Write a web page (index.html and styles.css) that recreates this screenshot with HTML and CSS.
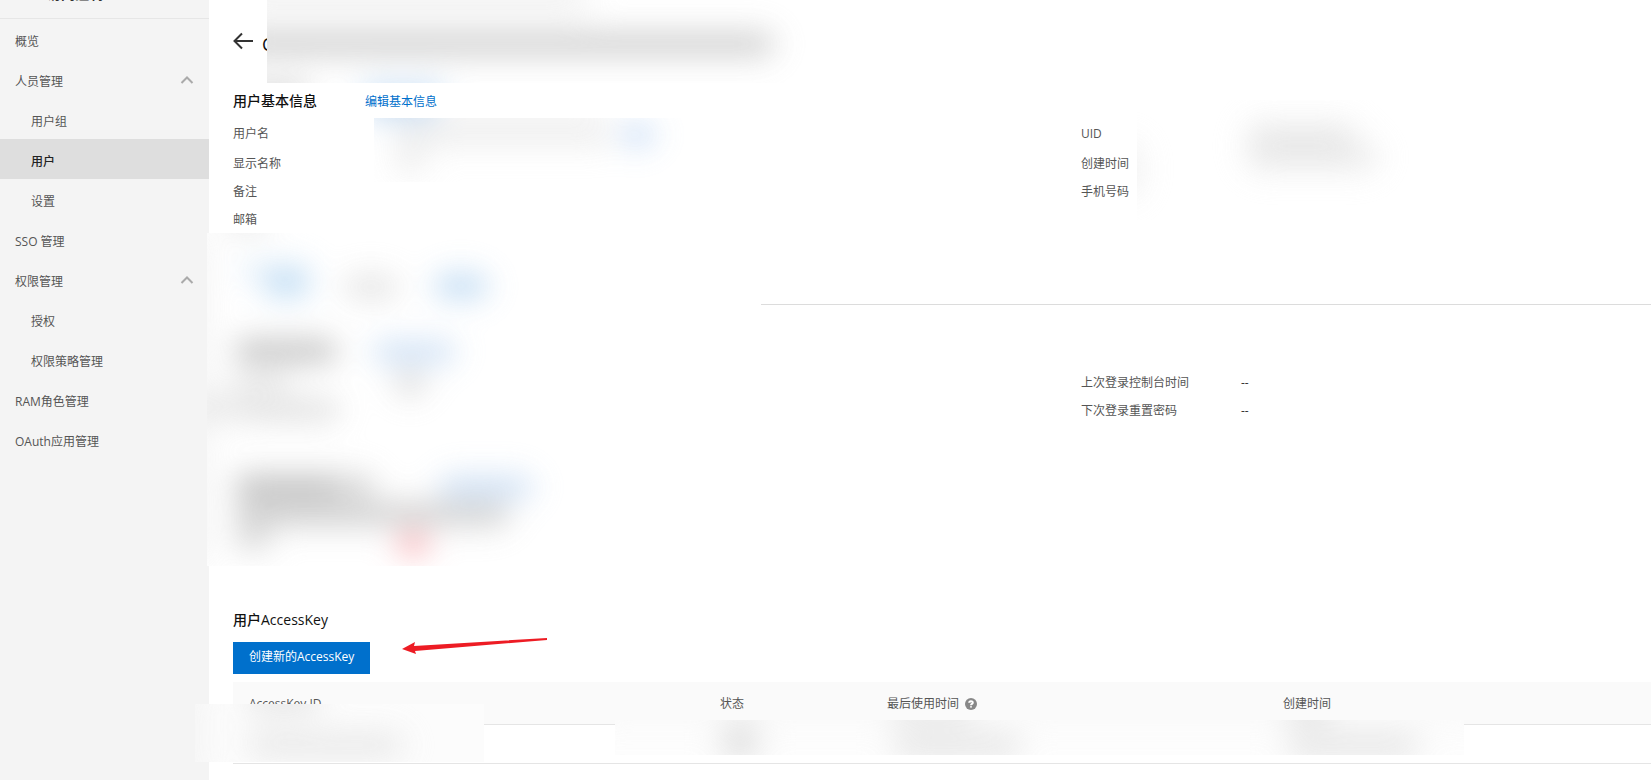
FILE: index.html
```html
<!DOCTYPE html>
<html lang="zh-CN">
<head>
    <meta charset="UTF-8">
    <meta name="viewport" content="width=device-width, initial-scale=1.0">
    <title>RAM访问控制</title>
    <link rel="stylesheet" href="styles.css">
</head>
<body>
    <!-- Sidebar -->
    <aside class="sidebar">
        <div class="sidebar-title">RAM访问控制</div>
        <nav class="menu">
            <a href="#" class="menu-item">概览</a>
            <button type="button" class="menu-item menu-group">人员管理
                <svg class="chevron" viewBox="0 0 14 8"><path d="M1.5 7L7 1.5L12.5 7"/></svg>
            </button>
            <a href="#" class="menu-item sub">用户组</a>
            <a href="#" class="menu-item sub active">用户</a>
            <a href="#" class="menu-item sub">设置</a>
            <a href="#" class="menu-item">SSO 管理</a>
            <button type="button" class="menu-item menu-group">权限管理
                <svg class="chevron" viewBox="0 0 14 8"><path d="M1.5 7L7 1.5L12.5 7"/></svg>
            </button>
            <a href="#" class="menu-item sub">授权</a>
            <a href="#" class="menu-item sub">权限策略管理</a>
            <a href="#" class="menu-item">RAM角色管理</a>
            <a href="#" class="menu-item">OAuth应用管理</a>
        </nav>
    </aside>

    <!-- Main content -->
    <main class="content">
        <div class="breadcrumb">RAM访问控制</div>
        <div class="page-head">
            <a href="#" class="back">
                <svg viewBox="0 0 20 18"><path d="M20 9H2M9 1.5L1.5 9L9 16.5"/></svg>
            </a>
            <h1>C</h1>
        </div>

        <section class="basic">
            <div class="section-head">
                <h2>用户基本信息</h2>
                <a href="#" class="edit-link">编辑基本信息</a>
            </div>
            <div class="info">
                <dl>
                    <div class="row first"><dt>用户名</dt><dd></dd></div>
                    <div class="row"><dt>显示名称</dt><dd></dd></div>
                    <div class="row"><dt>备注</dt><dd></dd></div>
                    <div class="row"><dt>邮箱</dt><dd></dd></div>
                </dl>
                <dl>
                    <div class="row first"><dt>UID</dt><dd></dd></div>
                    <div class="row"><dt>创建时间</dt><dd></dd></div>
                    <div class="row"><dt>手机号码</dt><dd></dd></div>
                </dl>
            </div>
        </section>

        <div class="tabs"></div>

        <section class="login">
            <div class="info">
                <dl></dl>
                <dl>
                    <div class="row"><dt>上次登录控制台时间</dt><dd>--</dd></div>
                    <div class="row"><dt>下次登录重置密码</dt><dd>--</dd></div>
                </dl>
            </div>
        </section>

        <section class="keys">
            <h2>用户AccessKey</h2>
            <button type="button" class="primary">创建新的AccessKey</button>
            <table>
                <colgroup>
                    <col class="col-id">
                    <col class="col-status">
                    <col class="col-used">
                    <col>
                </colgroup>
                <thead>
                    <tr>
                        <th>AccessKey ID</th>
                        <th>状态</th>
                        <th>最后使用时间
                            <svg class="help" viewBox="0 0 12 12"><circle cx="6" cy="6" r="6"/><path d="M4.2 4.8C4.2 2.6 7.8 2.6 7.8 4.7C7.8 5.8 6 5.9 6 7.2M6 8.3V9.6"/></svg>
                        </th>
                        <th>创建时间</th>
                    </tr>
                </thead>
                <tbody>
                    <tr><td></td><td></td><td></td><td></td></tr>
                </tbody>
            </table>
        </section>

        <!-- Red pointer next to the create button -->
        <svg class="pointer" viewBox="0 0 146 18"><path d="M0 11L13 4L12 8L145 0V2L13 13L14 16Z"/></svg>

        <!-- Blurred private data -->
        <svg class="mask mask-title" viewBox="0 0 540 83">
            <rect width="540" height="83" fill="#fff"/>
            <g class="smudge">
                <rect x="-30" y="-20" width="350" height="34" fill="#f1f1f1"/>
                <rect x="-30" y="34" width="535" height="20" fill="#bdbdbd"/>
                <rect x="-30" y="84" width="70" height="20" fill="#c8c8c8"/>
                <rect x="96" y="88" width="80" height="20" fill="#a8cdf1"/>
            </g>
        </svg>
        <svg class="mask mask-name" viewBox="0 0 310 64">
            <rect width="310" height="64" fill="#fff"/>
            <g class="smudge">
                <rect x="-8" y="-24" width="70" height="22" fill="#a8c8ea"/>
                <rect x="62" y="-20" width="170" height="15" fill="#eee"/>
                <rect x="24" y="10" width="212" height="14" fill="#dedede"/>
                <rect x="22" y="28" width="28" height="26" fill="#eaeaea"/>
                <rect x="250" y="9" width="28" height="16" fill="#a3c5f0"/>
            </g>
        </svg>
        <svg class="mask mask-uid" viewBox="0 0 280 120">
            <g class="smudge">
                <rect x="-20" y="44" width="20" height="50" fill="#e6e6e6"/>
                <rect x="112" y="24" width="104" height="22" fill="#e4e4e4"/>
                <rect x="112" y="46" width="126" height="22" fill="#e4e4e4"/>
            </g>
        </svg>
        <svg class="mask mask-login" viewBox="0 0 554 333">
            <rect width="554" height="333" fill="#fff"/>
            <g class="smudge">
                <rect x="-20" y="0" width="22" height="333" fill="#f1f1f1"/>
                <rect x="20" y="-22" width="40" height="20" fill="#ddd"/>
                <rect x="36" y="32" width="66" height="12" fill="#cce2f5"/>
                <rect x="60" y="42" width="40" height="20" fill="#a8d0f0"/>
                <rect x="140" y="45" width="48" height="18" fill="#d4d4d4"/>
                <rect x="230" y="43" width="48" height="20" fill="#a6ccee"/>
                <rect x="30" y="108" width="98" height="20" fill="#adadad"/>
                <rect x="168" y="110" width="78" height="18" fill="#b9d3f1"/>
                <rect x="190" y="140" width="26" height="20" fill="#cbcbcb"/>
                <rect x="28" y="140" width="54" height="18" fill="#dedede"/>
                <rect x="-20" y="162" width="64" height="26" fill="#e4e4e4"/>
                <rect x="42" y="168" width="88" height="18" fill="#d2d2d2"/>
                <rect x="30" y="242" width="98" height="24" fill="#b4b4b4"/>
                <rect x="128" y="242" width="38" height="24" fill="#cfcfcf"/>
                <rect x="234" y="245" width="90" height="18" fill="#b9d3f1"/>
                <rect x="30" y="270" width="270" height="22" fill="#c4c4c4"/>
                <rect x="30" y="294" width="32" height="22" fill="#cfcfcf"/>
                <rect x="192" y="302" width="28" height="18" fill="#f98f96"/>
            </g>
        </svg>
        <svg class="mask mask-key" viewBox="0 0 289 58">
            <rect width="289" height="58" fill="#fcfcfc"/>
            <g class="smudge">
                <rect x="-20" y="-20" width="30" height="100" fill="#f2f2f2"/>
                <rect x="54" y="-24" width="68" height="34" fill="#e4e4e4"/>
                <rect x="54" y="31" width="152" height="20" fill="#e0e0e0"/>
            </g>
        </svg>
        <svg class="mask mask-row" viewBox="0 0 849 35">
            <rect width="849" height="35" fill="#fdfdfd"/>
            <g class="smudge">
                <rect x="-20" y="-24" width="890" height="26" fill="#f8f8f8"/>
                <rect x="110" y="-14" width="32" height="20" fill="#e9e9e9"/>
                <rect x="108" y="14" width="34" height="20" fill="#cacaca"/>
                <rect x="278" y="-20" width="78" height="24" fill="#e2e2e2"/>
                <rect x="280" y="16" width="124" height="20" fill="#dcdcdc"/>
                <rect x="672" y="-20" width="44" height="24" fill="#dcdcdc"/>
                <rect x="674" y="16" width="128" height="20" fill="#dcdcdc"/>
            </g>
        </svg>
    </main>
</body>
</html>
```
FILE: styles.css
```css
* {
    box-sizing: border-box;
}

body {
    margin: 0;
    min-height: 100vh;
    display: flex;
    overflow: hidden;
    font-family: "Open Sans", "Noto Sans CJK SC", sans-serif;
    font-size: 12px;
    line-height: 20px;
    color: #555;
    background-color: #fff;
}

a {
    color: #0070cc;
    text-decoration: none;
}

h1, h2, dl, dd {
    margin: 0;
}

/* Sidebar */
.sidebar {
    flex: 0 0 209px;
    background-color: #f4f4f4;
}

.sidebar-title {
    height: 35px;
    margin-top: -16px;
    padding-left: 15px;
    border-bottom: 1px solid #e6e6e6;
    font-size: 14px;
    font-weight: bold;
    color: #333;
}

.menu {
    display: flex;
    flex-direction: column;
}

.menu-item {
    display: flex;
    align-items: center;
    justify-content: space-between;
    height: 40px;
    padding: 6px 15px 0 15px;
    border: none;
    background: none;
    font: inherit;
    color: #555;
    cursor: pointer;
}

.menu-item.sub {
    padding-left: 31px;
}

.menu-item.active {
    background-color: #dedede;
    font-weight: 500;
    color: #222;
}

.chevron {
    width: 14px;
    height: 8px;
    margin-bottom: 4px;
    fill: none;
    stroke: #aaa;
    stroke-width: 2;
}

/* Main content */
.content {
    flex: 1;
    min-width: 0;
    position: relative;
    padding-left: 24px;
}

.breadcrumb {
    margin-top: -15px;
}

.page-head {
    display: flex;
    align-items: center;
    gap: 9px;
    height: 46px;
    margin: 16px 0 24px;
}

.page-head h1 {
    font-size: 18px;
    font-weight: 500;
    color: #111;
}

.back {
    display: flex;
    padding-bottom: 6px;
}

.back svg {
    width: 20px;
    height: 18px;
    fill: none;
    stroke: #333;
    stroke-width: 2;
}

h2 {
    font-size: 14px;
    font-weight: 500;
    color: #111;
}

.section-head {
    display: flex;
    align-items: baseline;
    gap: 48px;
}

.info {
    display: grid;
    grid-template-columns: minmax(0, 848px) 1fr;
    margin-top: 7px;
}

.row {
    display: flex;
    align-items: center;
    height: 28px;
}

.row.first {
    height: 31px;
    padding-bottom: 2px;
}

.row dt {
    width: 160px;
}

.row dd {
    color: #333;
}

.tabs {
    height: 40px;
    margin-top: 31px;
    border-bottom: 1px solid #dcdcdc;
}

.login {
    height: 305px;
    padding-top: 57px;
}

/* AccessKey list */
.primary {
    display: block;
    height: 32px;
    margin: 12px 0 8px;
    padding: 0 16px 2px;
    border: none;
    background-color: #0070cc;
    font: inherit;
    color: #fff;
    cursor: pointer;
}

.primary:hover {
    background-color: #0063b5;
}

table {
    width: 100%;
    table-layout: fixed;
    border-collapse: collapse;
}

.col-id {
    width: 471px;
}

.col-status {
    width: 167px;
}

.col-used {
    width: 396px;
}

th {
    height: 42px;
    padding: 2px 16px 0;
    background-color: #fafafa;
    border-bottom: 1px solid #e5e5e5;
    font-weight: normal;
    text-align: left;
}

td {
    height: 39px;
    padding: 0 16px;
    border-bottom: 1px solid #e5e5e5;
}

.help {
    width: 12px;
    height: 12px;
    margin-left: 3px;
    vertical-align: -2px;
    fill: #888;
}

.help path {
    fill: none;
    stroke: #fff;
    stroke-width: 2;
}

/* Overlays */
.pointer {
    position: absolute;
    top: 638px;
    left: 193px;
    width: 146px;
    height: 18px;
    fill: #ed1c24;
}

.mask {
    position: absolute;
    overflow: hidden;
}

.smudge {
    filter: blur(8px) blur(8px) blur(8px) blur(8px);
    opacity: 0.85;
}

.mask-title {
    top: 0;
    left: 58px;
    width: 540px;
    height: 83px;
}

.mask-name {
    top: 118px;
    left: 165px;
    width: 310px;
    height: 64px;
}

.mask-uid {
    top: 100px;
    left: 928px;
    width: 280px;
    height: 120px;
}

.mask-login {
    top: 233px;
    left: -2px;
    width: 554px;
    height: 333px;
}

.mask-key {
    top: 704px;
    left: -14px;
    width: 289px;
    height: 58px;
}

.mask-row {
    top: 720px;
    left: 406px;
    width: 849px;
    height: 35px;
}
```
